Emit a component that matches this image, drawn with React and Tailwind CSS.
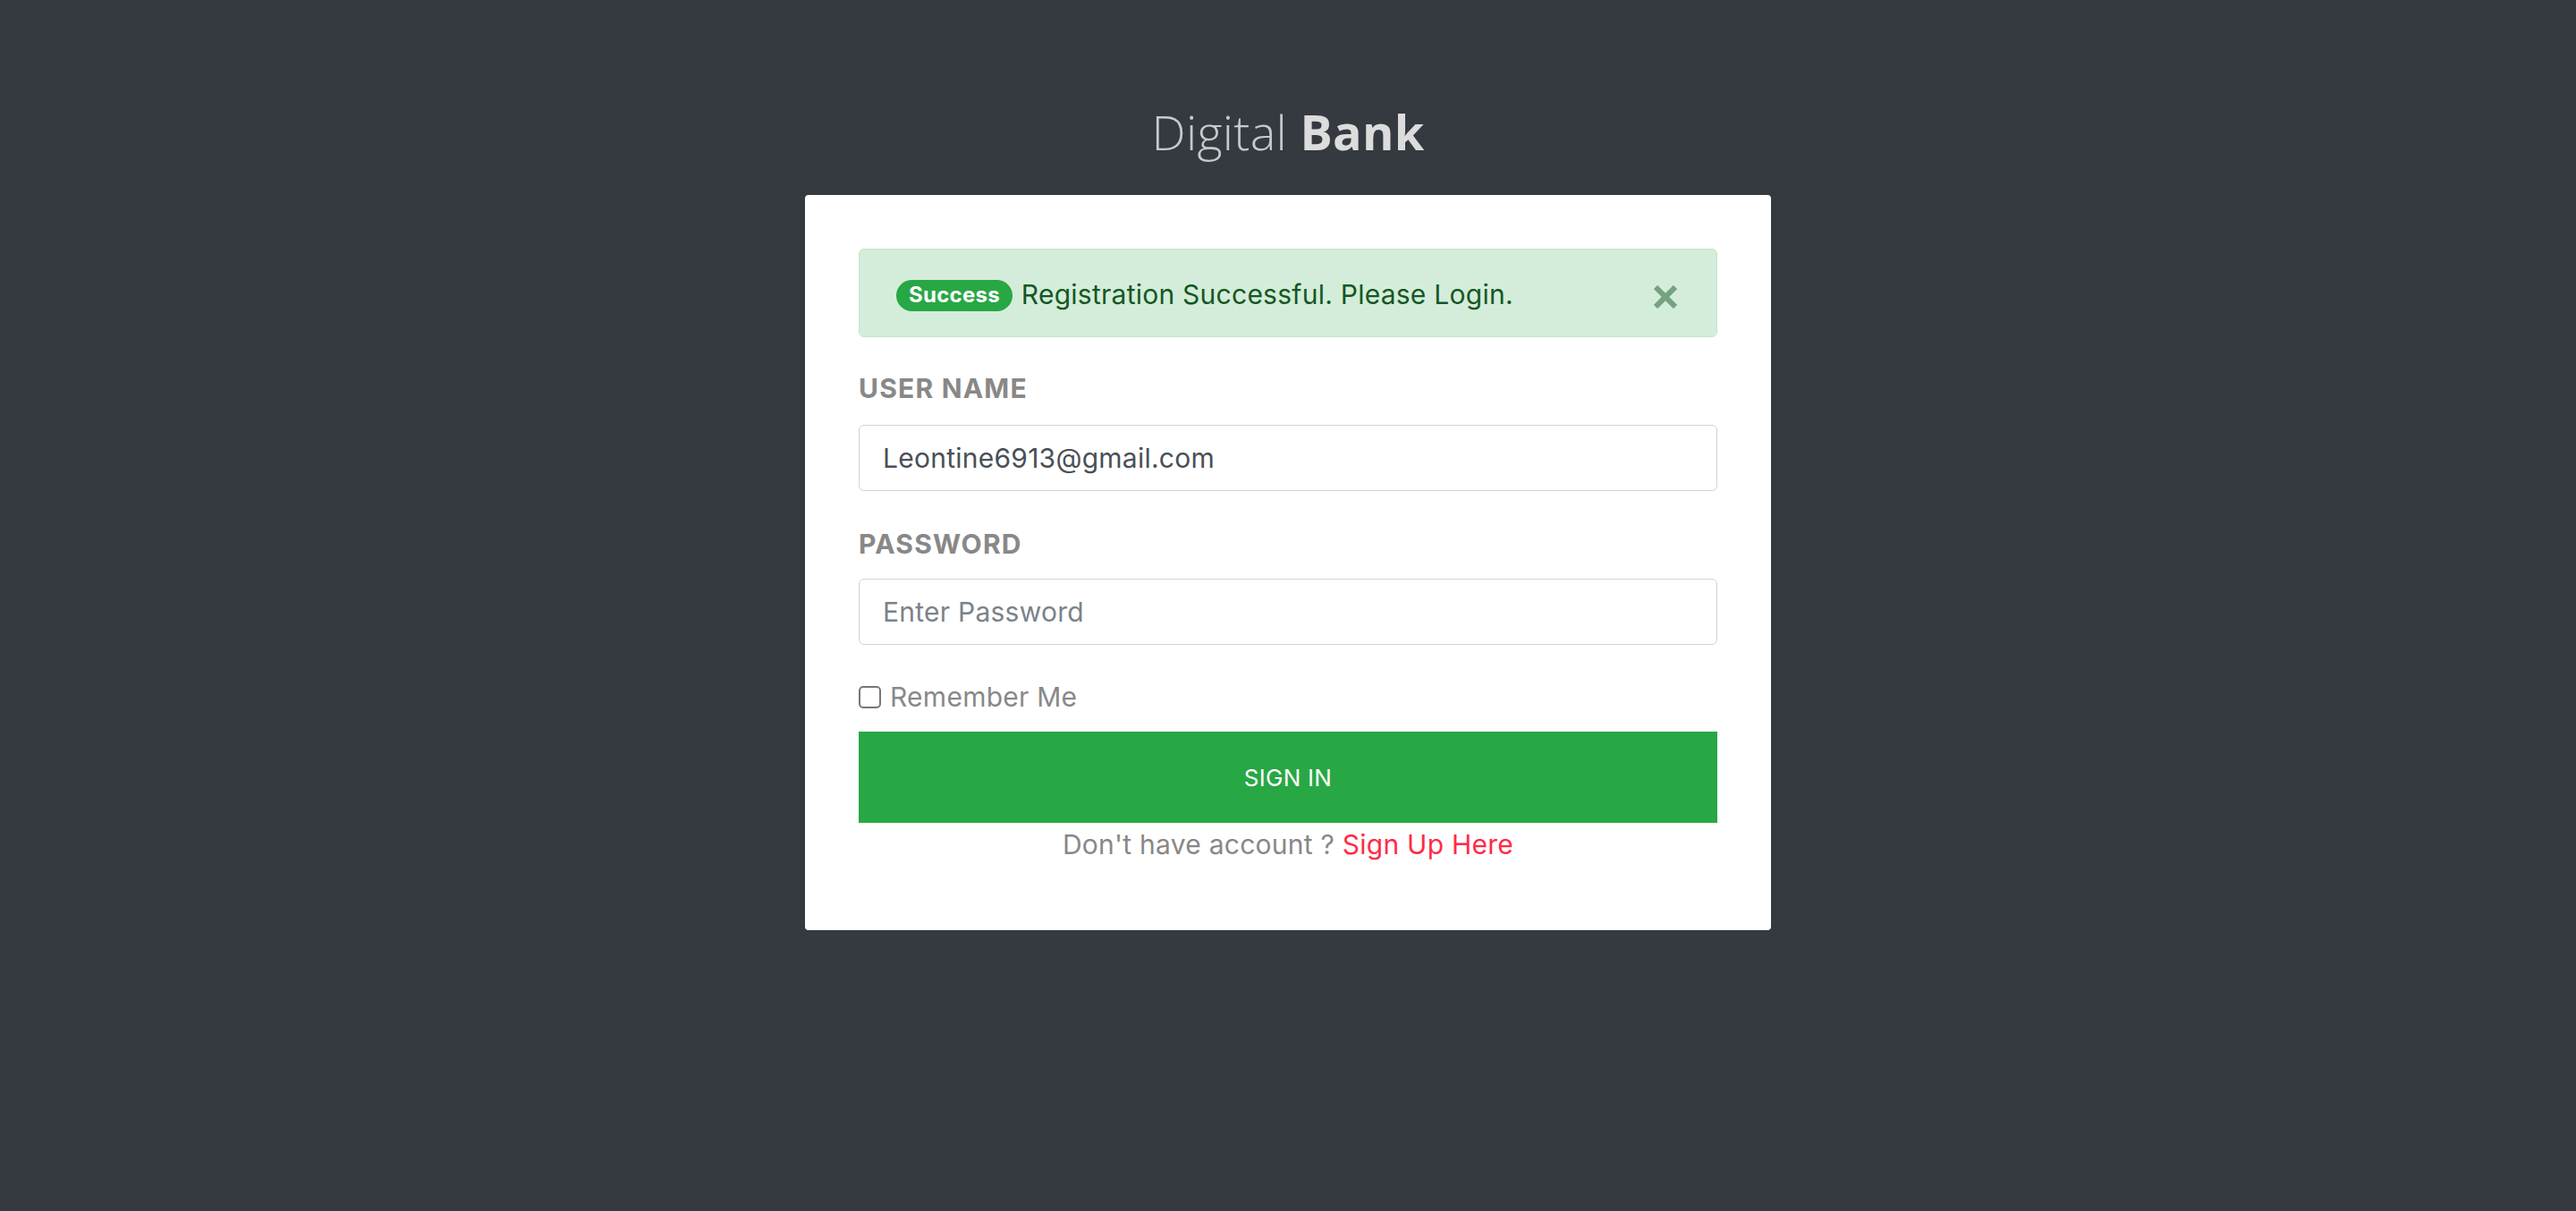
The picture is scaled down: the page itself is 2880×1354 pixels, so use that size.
export default function App() {
  return (
    <div className="min-h-[1354px] bg-[#343a40] font-['Inter','Liberation_Sans',sans-serif]">
      <div className="pt-[120px] flex flex-col items-center">
        <h1 className="text-[54px] leading-[54px] font-['Open_Sans','Liberation_Sans',sans-serif] text-[#c8c9cb] mb-[44px] tracking-[0.3px]">
          <span className="font-light">Digital</span>{' '}
          <span className="font-bold text-[#dcdcdd]">Bank</span>
        </h1>

        <div className="w-[1080px] bg-white rounded-[4px] px-[60px] pt-[60px] pb-[81px] tracking-[0.25px]">
          <div className="h-[99px] flex items-center justify-between pl-[41px] pr-[44px] bg-[#d4edda] border border-[#c3e6cb] rounded-[6px]">
            <div className="flex items-center pt-[3px]">
              <span className="h-[35px] px-[14px] flex items-center rounded-full bg-[#28a745] text-white text-[24px] font-bold leading-none mt-[2px]">
                Success
              </span>
              <span className="ml-[10px] text-[30px] leading-[30px] text-[#155724]">
                Registration Successful. Please Login.
              </span>
            </div>
            <svg width="26" height="26" viewBox="0 0 26 26" className="mt-[9px]">
              <path d="M2 2 L24 24 M24 2 L2 24" stroke="#155724" strokeOpacity="0.5" strokeWidth="6" />
            </svg>
          </div>

          <label className="block mt-[42px] text-[30px] leading-[30px] font-bold text-[#888888] tracking-[1.2px]">USER NAME</label>
          <div className="mt-[26px] h-[74px] flex items-center pl-[26px] border border-[#ced4da] rounded-[6px] text-[30px] text-[#495057]">
            Leontine6913@gmail.com
          </div>

          <label className="block mt-[44px] text-[30px] leading-[30px] font-bold text-[#888888] tracking-[1.2px]">PASSWORD</label>
          <div className="mt-[24px] h-[74px] flex items-center pl-[26px] border border-[#ced4da] rounded-[6px] text-[30px] text-[#7b8289]">
            Enter Password
          </div>

          <div className="mt-[43px] flex items-center">
            <span className="w-[25px] h-[25px] border-2 border-[#767676] rounded-[5px]" />
            <span className="ml-[10px] text-[30px] leading-[30px] text-[#888888]">Remember Me</span>
          </div>

          <div className="mt-[24px] h-[102px] bg-[#28a745] flex items-center justify-center text-white text-[26px]">
            SIGN IN
          </div>

          <p className="mt-[9px] text-center text-[30px] leading-[30px] text-[#888888]">
            Don't have account ? <span className="text-[#ff2b47]">Sign Up Here</span>
          </p>
        </div>
      </div>
    </div>
  );
}
